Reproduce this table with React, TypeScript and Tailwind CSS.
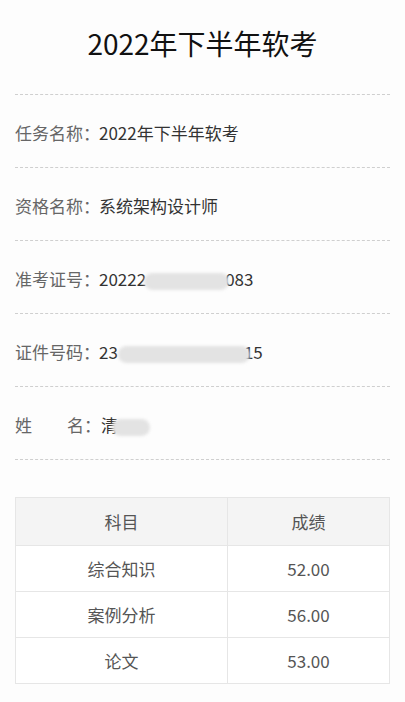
const FONT = "font-['Noto_Sans_CJK_SC','Noto_Sans',sans-serif]";

function Blur({ width }: { width: number }) {
  return (
    <span
      className="inline-block h-[17px] rounded-full bg-[#e3e3e3] blur-[1.5px] align-middle"
      style={{ width }}
    />
  );
}

function InfoRow({ label, children }: { label: React.ReactNode; children: React.ReactNode }) {
  return (
    <div className="flex items-center border-b border-dashed border-[#cfcfcf] pt-[25px] pb-[22px] text-[17px] leading-[25px]">
      <span className="w-[84px] shrink-0 whitespace-nowrap text-[#666]">{label}</span>
      <span className="flex items-center whitespace-nowrap text-[#333]">{children}</span>
    </div>
  );
}

const scores = [
  { subject: "综合知识", score: "52.00" },
  { subject: "案例分析", score: "56.00" },
  { subject: "论文", score: "53.00" },
];

export default function App() {
  return (
    <div className={`${FONT} min-h-[702px] w-[405px] bg-[#fdfdfd] px-[15px]`}>
      <div className="border-b border-dashed border-[#cfcfcf] pt-[23px] pb-[31px] text-center text-[28px] leading-[40px] text-[#111]">
        2022年下半年软考
      </div>

      <InfoRow label="任务名称：">2022年下半年软考</InfoRow>
      <InfoRow label="资格名称：">系统架构设计师</InfoRow>
      <InfoRow label="准考证号：">
        20222
        <span className="-ml-[2px] -mr-[4px]">
          <Blur width={85} />
        </span>
        083
      </InfoRow>
      <InfoRow label="证件号码：">
        23
        <span className="-mr-[6px]">
          <Blur width={132} />
        </span>
        15
      </InfoRow>
      <InfoRow
        label={
          <span className="flex w-[86px] justify-between">
            <span>姓</span>
            <span>名：</span>
          </span>
        }
      >
        <span className="ml-[2px]">清</span>
        <span className="-ml-[6px]">
          <Blur width={38} />
        </span>
      </InfoRow>

      <table className="mt-[37px] w-full border-collapse text-[17px] text-[#555]">
        <thead>
          <tr className="bg-[#f4f4f4]">
            <th className="h-[48px] w-[212px] border border-[#e6e6e6] font-normal">科目</th>
            <th className="h-[48px] border border-[#e6e6e6] font-normal">成绩</th>
          </tr>
        </thead>
        <tbody>
          {scores.map((row) => (
            <tr key={row.subject} className="bg-white">
              <td className="h-[46px] border border-[#e6e6e6] text-center">{row.subject}</td>
              <td className="h-[46px] border border-[#e6e6e6] text-center">{row.score}</td>
            </tr>
          ))}
        </tbody>
      </table>
    </div>
  );
}
